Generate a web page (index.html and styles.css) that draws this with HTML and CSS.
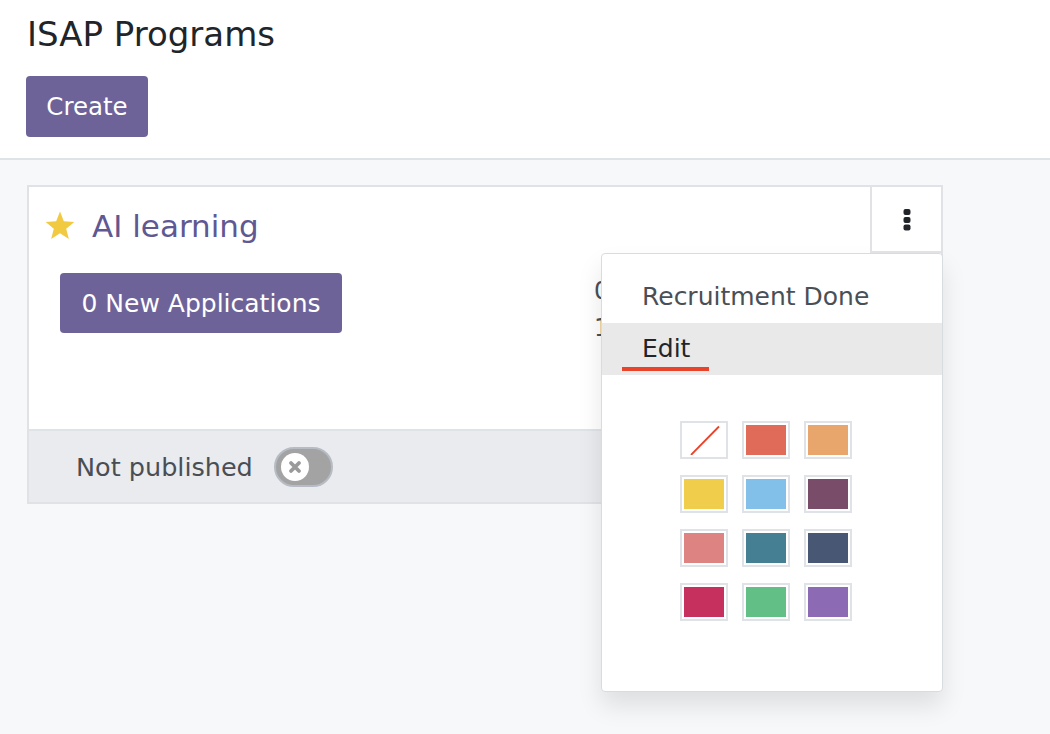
FILE: index.html
```html
<!DOCTYPE html>
<html>
<head>
<meta charset="utf-8">
<link rel="stylesheet" href="styles.css">
</head>
<body>
<header class="control-panel">
  <h1 class="page-title">ISAP Programs</h1>
  <button class="btn-primary btn-create">Create</button>
</header>
<main class="kanban">
  <div class="card">
    <div class="card-body">
      <div class="card-title-row">
        <svg class="star" width="32" height="32" viewBox="0 0 30 30"><path d="M15 1.5 L18.6 10.6 L28.4 11.2 L20.8 17.5 L23.3 27.1 L15 21.8 L6.7 27.1 L9.2 17.5 L1.6 11.2 L11.4 10.6 Z" fill="#f1ca41"/></svg>
        <span class="card-title">AI learning</span>
      </div>
      <div class="card-content">
        <button class="btn-primary btn-new-app">0 New Applications</button>
        <div class="card-stats">
          <div>0 Applications</div>
          <div>1 To Recruit</div>
        </div>
      </div>
    </div>
    <div class="card-footer">
      <span class="publish-label">Not published</span>
      <span class="toggle"><span class="knob"><svg width="16" height="16" viewBox="0 0 16 16"><path d="M4 4 L12 12 M12 4 L4 12" stroke="#9a9a9a" stroke-width="3.8" stroke-linecap="round"/></svg></span></span>
    </div>
    <div class="dropdown-toggle">
      <svg width="8" height="22" viewBox="0 0 8 22"><rect x="0.5" y="0" width="7" height="6" rx="2" fill="#212529"/><rect x="0.5" y="8" width="7" height="6" rx="2" fill="#212529"/><rect x="0.5" y="15.5" width="7" height="6" rx="2" fill="#212529"/></svg>
    </div>
    <div class="dropdown-menu">
      <div class="menu-item">Recruitment Done</div>
      <div class="menu-item active">Edit<span class="underline"></span></div>
      <div class="swatches">
        <span class="swatch"><span class="fill none"><svg width="40" height="30" viewBox="0 0 40 30"><path d="M7 30 L35 1.5" stroke="#e8432b" stroke-width="1.8"/></svg></span></span>
        <span class="swatch"><span class="fill" style="background:#e06b58"></span></span>
        <span class="swatch"><span class="fill" style="background:#e9a66c"></span></span>
        <span class="swatch"><span class="fill" style="background:#f0cd4a"></span></span>
        <span class="swatch"><span class="fill" style="background:#82c0ea"></span></span>
        <span class="swatch"><span class="fill" style="background:#794d69"></span></span>
        <span class="swatch"><span class="fill" style="background:#dd8382"></span></span>
        <span class="swatch"><span class="fill" style="background:#447f93"></span></span>
        <span class="swatch"><span class="fill" style="background:#485774"></span></span>
        <span class="swatch"><span class="fill" style="background:#c5305e"></span></span>
        <span class="swatch"><span class="fill" style="background:#62bf86"></span></span>
        <span class="swatch"><span class="fill" style="background:#8d6ab4"></span></span>
      </div>
    </div>
  </div>
</main>
</body>
</html>
```

FILE: styles.css
```css
html, body {
  margin: 0;
  padding: 0;
  height: 100%;
}
body {
  font-family: "DejaVu Sans", "Noto Sans", sans-serif;
  background: #f7f8fa;
  color: #212529;
}
.control-panel {
  background: #fff;
  border-bottom: 2px solid #dfe2e6;
  padding: 12px 0 20px 26px;
  height: 126px;
}
.page-title {
  margin: 0 0 0 1px;
  font-size: 34px;
  font-weight: normal;
  line-height: 44px;
  color: #212529;
}
.btn-primary {
  font-family: inherit;
  background: #6e6399;
  color: #fff;
  border: none;
  border-radius: 4px;
  cursor: pointer;
  padding: 0;
}
.btn-create {
  margin-top: 20px;
  width: 122px;
  height: 61px;
  font-size: 24.5px;
}
.kanban {
  padding: 25px 0 0 27px;
}
.card {
  position: relative;
  width: 912px;
  background: #fff;
  border: 2px solid #e0e2e6;
  display: flex;
  flex-direction: column;
}
.card-body {
  height: 242px;
}
.card-title-row {
  display: flex;
  align-items: center;
  gap: 16px;
  padding: 19px 0 0 15px;
  height: 40px;
}
.star { display: block; }
.card-title {
  font-size: 31px;
  color: #5f5892;
  line-height: 40px;
}
.card-content {
  display: flex;
  align-items: flex-start;
  padding: 27px 0 0 31px;
}
.btn-new-app {
  width: 282px;
  height: 60px;
  font-size: 25px;
}
.card-stats {
  margin-left: 252px;
  margin-top: 0px;
  font-size: 24px;
  line-height: 37px;
  color: #4a4f55;
}
.card-footer {
  background: #e9ebef;
  border-top: 2px solid #dfe2e6;
  height: 71px;
  display: flex;
  align-items: center;
  padding-left: 47px;
}
.publish-label {
  font-size: 25.5px;
  color: #4a4e54;
}
.toggle {
  margin-left: 21px;
  height: 36px;
  width: 50px;
  border: 2px solid #b7bcc4;
  background: #a3a3a3;
  border-radius: 20px;
  display: flex;
  align-items: center;
  padding-left: 5px;
  box-sizing: content-box;
}
.knob {
  width: 28px;
  height: 28px;
  border-radius: 50%;
  background: #fff;
  display: flex;
  align-items: center;
  justify-content: center;
}
.knob svg { display: block; }
.dropdown-toggle {
  position: absolute;
  top: 0;
  right: 0;
  width: 71px;
  height: 66px;
  border-left: 2px solid #e0e2e6;
  border-bottom: 2px solid #e0e2e6;
  background: #fff;
  display: flex;
  justify-content: center;
  padding-top: 22px;
  box-sizing: border-box;
  z-index: 3;
}
.dropdown-toggle svg { display: block; }
.dropdown-menu {
  position: absolute;
  left: 572px;
  top: 66px;
  width: 340px;
  height: 420px;
  background: #fff;
  border: 1px solid #d9dcdf;
  border-radius: 4px;
  box-shadow: 0 14px 24px rgba(0, 0, 0, 0.10);
  padding-top: 17px;
  box-sizing: content-box;
  z-index: 2;
}
.menu-item {
  position: relative;
  height: 52px;
  line-height: 52px;
  padding-left: 40px;
  font-size: 25px;
  color: #4a4f55;
}
.menu-item.active {
  background: #e9e9e9;
  color: #212529;
}
.underline {
  position: absolute;
  left: 20px;
  top: 44px;
  width: 87px;
  height: 4px;
  background: #e8432b;
}
.swatches {
  display: grid;
  grid-template-columns: repeat(3, 48px);
  column-gap: 14px;
  row-gap: 16px;
  padding: 46px 0 0 78px;
}
.swatch {
  width: 48px;
  height: 38px;
  box-sizing: border-box;
  border: 2px solid #dfe2e6;
  padding: 2px;
  background: #fff;
}
.fill {
  display: block;
  width: 100%;
  height: 100%;
  overflow: hidden;
}
.fill svg { display: block; }
```
